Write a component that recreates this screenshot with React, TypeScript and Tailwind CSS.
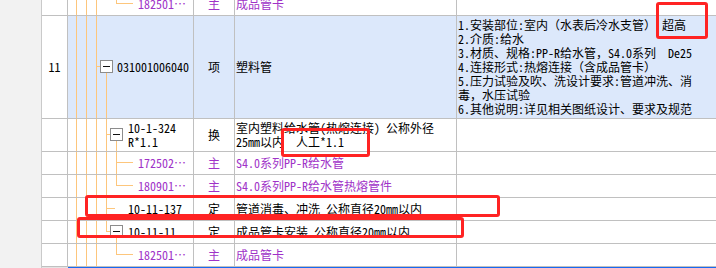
import React from "react";

type Tree = {
  full: number[];
  half?: number[];
  stem?: [number, number];
  box?: number;
  down?: number;
};

type Row = {
  h: number;
  hClass: string;
  num?: string;
  code: React.ReactNode;
  codePad: string;
  tree: Tree;
  kind: string;
  name: React.ReactNode;
  feature?: React.ReactNode;
  purple?: boolean;
  active?: boolean;
};

const LINE = "#fdc67c";

function TreeLines({ h, tree }: { h: number; tree: Tree }) {
  const ch = h - 1;
  const mid = Math.floor((ch - 1) / 2);
  return (
    <svg
      className="absolute inset-0 pointer-events-none"
      width={126}
      height={ch}
      shapeRendering="crispEdges"
    >
      {tree.full.map((x) => (
        <line key={`f${x}`} x1={x + 0.5} y1={0} x2={x + 0.5} y2={ch} stroke={LINE} />
      ))}
      {tree.half?.map((x) => (
        <line key={`h${x}`} x1={x + 0.5} y1={0} x2={x + 0.5} y2={mid + 1} stroke={LINE} />
      ))}
      {tree.stem && (
        <line x1={tree.stem[0]} y1={mid + 0.5} x2={tree.stem[1]} y2={mid + 0.5} stroke={LINE} />
      )}
      {tree.down !== undefined && (
        <line x1={tree.down + 0.5} y1={mid + 7} x2={tree.down + 0.5} y2={ch} stroke={LINE} />
      )}
      {tree.box !== undefined && (
        <g>
          <rect x={tree.box + 0.5} y={mid - 5.5} width={12} height={12} fill="#fff" stroke="#8c8c8c" />
          <line x1={tree.box + 3} y1={mid + 0.5} x2={tree.box + 10} y2={mid + 0.5} stroke="#111" />
        </g>
      )}
    </svg>
  );
}

const rows: Row[] = [
  {
    h: 23,
    hClass: "h-[23px]",
    code: "182501…",
    codePad: "pl-[70px]",
    tree: { full: [8, 18, 28], half: [48], stem: [48, 65] },
    kind: "主",
    name: "成品管卡",
    purple: true,
  },
  {
    h: 103,
    hClass: "h-[103px]",
    num: "11",
    code: "031001006040",
    codePad: "pl-[49px]",
    tree: { full: [8, 18, 28], stem: [28, 32], box: 32, down: 38 },
    kind: "项",
    name: "塑料管",
    active: true,
    feature: (
      <>
        <div>1.安装部位:室内（水表后冷水支管） 超高</div>
        <div>2.介质:给水</div>
        <div>3.材质、规格:PP-R给水管，S4.0系列  De25</div>
        <div>4.连接形式:热熔连接（含成品管卡）</div>
        <div>5.压力试验及吹、洗设计要求:管道冲洗、消</div>
        <div>毒，水压试验</div>
        <div>6.其他说明:详见相关图纸设计、要求及规范</div>
      </>
    ),
  },
  {
    h: 33,
    hClass: "h-[33px]",
    code: (
      <>
        <div>10-1-324</div>
        <div>R*1.1</div>
      </>
    ),
    codePad: "pl-[60px]",
    tree: { full: [8, 18, 28, 38], stem: [38, 42], box: 42, down: 48 },
    kind: "换",
    name: (
      <>
        <div>室内塑料给水管(热熔连接) 公称外径</div>
        <div>25mm以内  人工*1.1</div>
      </>
    ),
  },
  {
    h: 23,
    hClass: "h-[23px]",
    code: "172502…",
    codePad: "pl-[70px]",
    tree: { full: [8, 18, 28, 38, 48], stem: [48, 65] },
    kind: "主",
    name: "S4.0系列PP-R给水管",
    purple: true,
  },
  {
    h: 23,
    hClass: "h-[23px]",
    code: "180901…",
    codePad: "pl-[70px]",
    tree: { full: [8, 18, 28, 38], half: [48], stem: [48, 65] },
    kind: "主",
    name: "S4.0系列PP-R给水管热熔管件",
    purple: true,
  },
  {
    h: 23,
    hClass: "h-[23px]",
    code: "10-11-137",
    codePad: "pl-[60px]",
    tree: { full: [8, 18, 28, 38], stem: [38, 47] },
    kind: "定",
    name: "管道消毒、冲洗 公称直径20mm以内",
  },
  {
    h: 23,
    hClass: "h-[23px]",
    code: "10-11-11",
    codePad: "pl-[60px]",
    tree: { full: [8, 18, 28], half: [38], stem: [38, 42], box: 42, down: 48 },
    kind: "定",
    name: "成品管卡安装 公称直径20mm以内",
  },
  {
    h: 23,
    hClass: "h-[23px]",
    code: "182501…",
    codePad: "pl-[70px]",
    tree: { full: [8, 18, 28], half: [48], stem: [48, 65] },
    kind: "主",
    name: "成品管卡",
    purple: true,
  },
];

export default function App() {
  return (
    <div className="relative w-[716px] h-[268px] overflow-hidden bg-white flex text-[12px] leading-[14px] text-black font-['Noto_Sans_Mono_CJK_SC','Noto_Sans_CJK_SC',monospace] whitespace-pre">
      <div className="w-[42px] shrink-0 bg-[#f2f2f2] border-r border-[#cacaca]" />

      <div className="flex flex-col -mt-[7px] shrink-0">
        {rows.map((r, i) => {
          const bg = r.active ? "bg-[#dce8fb]" : "bg-white";
          const color = r.purple ? "text-[#a032c8]" : "text-black";
          return (
            <div key={i} className={`flex shrink-0 border-b border-[#c0c0c0] ${r.hClass}`}>
              <div className="w-[26px] shrink-0 border-r border-[#c0c0c0] bg-white flex items-center justify-center">
                {r.num}
              </div>
              <div className={`relative w-[126px] shrink-0 border-r border-[#c0c0c0] flex items-center ${bg}`}>
                <TreeLines h={r.h} tree={r.tree} />
                <div className={`relative ${r.codePad} ${color}`}>{r.code}</div>
              </div>
              <div className={`w-[41px] shrink-0 border-r border-[#c0c0c0] flex items-center justify-center ${bg} ${color}`}>
                {r.kind}
              </div>
              <div className={`w-[222px] shrink-0 border-r border-[#c0c0c0] flex items-center pl-[1px] ${bg} ${color}`}>
                <div>{r.name}</div>
              </div>
              <div className={`w-[300px] shrink-0 flex items-center pl-[1px] ${bg}`}>
                <div>{r.feature}</div>
              </div>
            </div>
          );
        })}
        <div className="flex h-[2px] shrink-0">
          <div className="w-[26px] shrink-0 bg-[#e4e4e4]" />
          <div className="flex-1 bg-[#1769f2]" />
        </div>
      </div>

      {/* hand-drawn red marks */}
      <div className="absolute left-[656px] top-[2px] w-[52px] h-[37px] border-[3px] border-[#ff2323] rounded-[3px]" />
      <div className="absolute left-[281px] top-[128px] w-[89px] h-[29px] border-[3px] border-[#ff2323] rounded-[3px]" />
      <div className="absolute left-[85px] top-[195px] w-[415px] h-[22px] border-[3px] border-[#ff2323] rounded-[3px]" />
      <div className="absolute left-[77px] top-[217px] w-[387px] h-[21px] border-[3px] border-[#ff2323] rounded-[3px]" />
    </div>
  );
}
